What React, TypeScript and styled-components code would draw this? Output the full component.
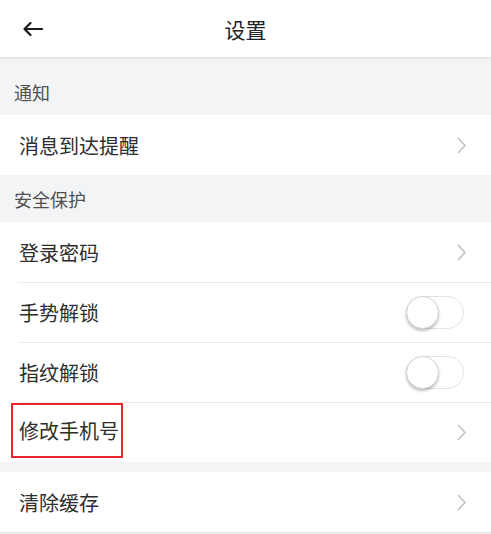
import React from "react";
import styled, { createGlobalStyle } from "styled-components";

const Global = createGlobalStyle`
  html, body { margin: 0; padding: 0; background: #f3f4f6; }
  body { font-family: "Noto Sans CJK SC", "Noto Sans", sans-serif; -webkit-font-smoothing: antialiased; }
  * { box-sizing: border-box; }
`;

const Page = styled.div`
  min-height: 100vh;
  background: #f3f4f6;
  display: flex;
  flex-direction: column;
`;

const Header = styled.header`
  position: relative;
  z-index: 1;
  height: 57px;
  background: #fff;
  display: grid;
  grid-template-columns: 60px 1fr 60px;
  align-items: center;
  box-shadow: 0 1px 3px rgba(0, 0, 0, 0.12);
`;

const BackButton = styled.button`
  border: 0;
  background: none;
  padding: 0 0 0 23px;
  height: 100%;
  display: flex;
  align-items: center;
  color: #1a1a1a;
`;

const Title = styled.h1`
  margin: 0;
  text-align: center;
  font-size: 21px;
  font-weight: 400;
  color: #222;
`;

const SectionTitle = styled.div<{ $top?: number }>`
  height: 47px;
  margin-top: ${(p) => p.$top ?? 0}px;
  padding-left: 14px;
  display: flex;
  align-items: center;
  font-size: 18px;
  color: #505050;
`;

const Group = styled.div<{ $top?: number; $bottomLine?: boolean }>`
  background: #fff;
  margin-top: ${(p) => p.$top ?? 0}px;
  border-bottom: ${(p) => (p.$bottomLine ? "1px solid #e8e8e8" : "none")};
`;

const Row = styled.div<{ $divider?: boolean }>`
  height: 60px;
  margin-left: 18px;
  padding-right: 24px;
  display: flex;
  align-items: center;
  justify-content: space-between;
  border-top: ${(p) => (p.$divider ? "1px solid #ebebeb" : "none")};
`;

const Label = styled.span`
  font-size: 20px;
  color: #2e2e2e;
  margin-left: 1px;
`;

const Highlight = styled.span`
  display: inline-flex;
  align-items: center;
  height: 55px;
  margin: -4px 0 0 -7px;
  padding: 0 2px 0 6px;
  border: 2px solid #e8262b;
  font-size: 20px;
  color: #2e2e2e;
`;

const Track = styled.span`
  position: relative;
  width: 58px;
  height: 33px;
  margin-right: 3px;
  border-radius: 17px;
  border: 1px solid #e3e3e3;
  background: #fff;
`;

const Knob = styled.span`
  position: absolute;
  left: -1px;
  top: -1px;
  width: 33px;
  height: 33px;
  border-radius: 50%;
  background: #fff;
  border: 1px solid #d4d4d4;
  box-shadow: 0 2px 3px rgba(0, 0, 0, 0.25);
`;

const Chevron = () => (
  <svg width="10" height="17" viewBox="0 0 10 17" fill="none">
    <path d="M1.5 1.5 L8 8.5 L1.5 15.5" stroke="#c4c4c4" strokeWidth="1.8" strokeLinecap="round" strokeLinejoin="round" />
  </svg>
);

const Toggle = () => (
  <Track>
    <Knob />
  </Track>
);

export default function App() {
  return (
    <>
      <Global />
      <Page>
        <Header>
          <BackButton aria-label="back">
            <svg width="20" height="14" viewBox="0 0 20 14" fill="none">
              <path d="M19 7 H1.5 M7.5 1 L1.5 7 L7.5 13" stroke="#1a1a1a" strokeWidth="2.2" strokeLinecap="round" strokeLinejoin="round" />
            </svg>
          </BackButton>
          <Title>设置</Title>
          <span />
        </Header>

        <SectionTitle $top={11}>通知</SectionTitle>
        <Group>
          <Row>
            <Label>消息到达提醒</Label>
            <Chevron />
          </Row>
        </Group>

        <SectionTitle>安全保护</SectionTitle>
        <Group>
          <Row>
            <Label>登录密码</Label>
            <Chevron />
          </Row>
          <Row $divider>
            <Label>手势解锁</Label>
            <Toggle />
          </Row>
          <Row $divider>
            <Label>指纹解锁</Label>
            <Toggle />
          </Row>
          <Row $divider>
            <Highlight>修改手机号</Highlight>
            <Chevron />
          </Row>
        </Group>

        <Group $top={10} $bottomLine>
          <Row>
            <Label>清除缓存</Label>
            <Chevron />
          </Row>
        </Group>
      </Page>
    </>
  );
}
